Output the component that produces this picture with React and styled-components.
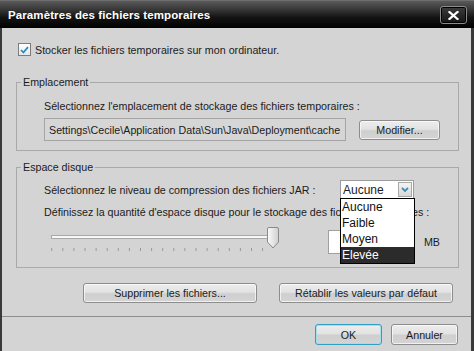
import React from 'react';
import styled, { createGlobalStyle } from 'styled-components';

const GlobalStyle = createGlobalStyle`
  html, body {
    margin: 0;
    padding: 0;
    background: #d4d4d4;
  }
  * {
    box-sizing: border-box;
  }
`;

const Window = styled.div`
  width: 474px;
  height: 351px;
  display: flex;
  flex-direction: column;
  font-family: 'Liberation Sans', Arial, sans-serif;
  font-size: 10.7px;
  color: #1b1b1b;
  overflow: hidden;
`;

const TitleBar = styled.div`
  height: 28px;
  flex: none;
  display: flex;
  align-items: center;
  justify-content: space-between;
  padding: 0 7px 0 8px;
  background: linear-gradient(to bottom, #5a5a5a 0%, #333 35%, #141414 60%, #000 100%);
  border-top: 1px solid #6e6e6e;
`;

const Title = styled.span`
  color: #fff;
  font-weight: bold;
  font-size: 11.5px;
  letter-spacing: 0.1px;
`;

const CloseButton = styled.div`
  width: 27px;
  height: 18px;
  border-radius: 3px;
  border: 1px solid #8c8c8c;
  box-shadow: inset 0 0 0 1px #000;
  background: linear-gradient(to bottom, #3c3c3c, #151515);
  display: flex;
  align-items: center;
  justify-content: center;
  margin-top: 1px;
`;

const Frame = styled.div`
  flex: 1;
  display: flex;
  flex-direction: column;
  border-left: 2px solid #3a3a3a;
  border-right: 3px solid #3a3a3a;
  background: #d4d4d4;
`;

const Body = styled.div`
  padding: 0 12px 0 14px;
  display: flex;
  flex-direction: column;
`;

const CheckRow = styled.label`
  display: flex;
  align-items: center;
  gap: 4px;
  margin-top: 15px;
  margin-left: 2px;
  height: 13px;
`;

const CheckBox = styled.span`
  width: 13px;
  height: 13px;
  border: 1px solid #7c7c7c;
  background: linear-gradient(to bottom, #fff, #e6e6e6);
  display: flex;
  align-items: center;
  justify-content: center;
`;

const GroupBox = styled.fieldset`
  margin: ${({ $top }) => $top}px 0 0 0;
  padding: 0;
  border: 1px solid #a9a9a9;
  min-width: 0;
`;

const Legend = styled.legend`
  margin-left: 4px;
  padding: 0 2px;
  line-height: 13px;
`;

const GroupContent = styled.div`
  padding: ${({ $pad }) => $pad};
  display: flex;
  flex-direction: column;
`;

const Line = styled.div`
  line-height: 14px;
  margin-top: ${({ $top }) => $top || 0}px;
  white-space: nowrap;
`;

const Row = styled.div`
  display: flex;
  align-items: ${({ $align }) => $align || 'center'};
  margin-top: ${({ $top }) => $top || 0}px;
`;

const PathField = styled.div`
  width: 304px;
  height: 23px;
  border: 1px solid #a4a4a4;
  background: #d6d6d6;
  display: flex;
  align-items: center;
  padding-left: 4px;
  white-space: nowrap;
  overflow: hidden;
  margin-right: 13px;
`;

const Button = styled.div`
  width: ${({ $w }) => $w}px;
  height: ${({ $h }) => $h || 20}px;
  border-radius: 3px;
  border: 1px solid ${({ $focus }) => ($focus ? '#2f9fc4' : '#8d8d8d')};
  box-shadow: inset 0 0 0 1px ${({ $focus }) => ($focus ? '#a6dcec' : 'rgba(255,255,255,0.65)')};
  background: linear-gradient(to bottom, #ededed 0%, #e2e2e2 45%, #cfcfcf 55%, #d4d4d4 100%);
  display: flex;
  align-items: center;
  justify-content: center;
  white-space: nowrap;
  flex: none;
`;

const Label = styled.span`
  width: ${({ $w }) => $w}px;
  flex: none;
  white-space: nowrap;
  line-height: 14px;
`;

const Select = styled.div`
  position: relative;
  width: 74px;
  height: 19px;
  border: 1px solid #9c9c9c;
  background: #fff;
  display: flex;
  align-items: center;
  justify-content: space-between;
  padding: 0 1px 0 2px;
  font-size: 12px;
`;

const SelectArrow = styled.span`
  width: 14px;
  height: 15px;
  border: 1px solid #a8a8a8;
  background: linear-gradient(to bottom, #f4f4f4, #d8d8d8);
  display: flex;
  align-items: center;
  justify-content: center;
`;

const OptionList = styled.div`
  position: absolute;
  top: 100%;
  left: -1px;
  width: 75px;
  border: 1px solid #000;
  background: #fff;
  z-index: 2;
`;

const Option = styled.div`
  height: 16px;
  line-height: 16px;
  padding-left: 1px;
  font-size: 12px;
  background: ${({ $active }) => ($active ? '#2b2b2b' : 'transparent')};
  color: ${({ $active }) => ($active ? '#fff' : '#111')};
`;

const Slider = styled.svg`
  margin-left: 7px;
  flex: none;
  display: block;
`;

const NumberField = styled.div`
  width: 80px;
  height: 24px;
  margin: 5px 0 0 47px;
  border: 1px solid #a0a0a0;
  background: #fff;
`;

const Unit = styled.span`
  margin: 10px 0 0 20px;
  line-height: 14px;
`;

const ActionRow = styled.div`
  display: flex;
  justify-content: flex-end;
  gap: 22px;
  margin-top: 15px;
  padding-right: 6px;
`;

const Separator = styled.div`
  height: 1px;
  background: #8e8e8e;
  margin-top: 13px;
`;

const Footer = styled.div`
  display: flex;
  justify-content: flex-end;
  gap: 9px;
  margin-top: 7px;
  padding-right: 13px;
`;

const options = ['Aucune', 'Faible', 'Moyen', 'Elevée'];

function SliderDrawing() {
  const ticks = [];
  for (let k = 0; k < 20; k++) {
    const x = 0.7 + k * 11.1;
    ticks.push(<line key={k} x1={x} x2={x} y1={23} y2={26} stroke="#9a9a90" strokeWidth="1" />);
  }
  return (
    <Slider width="230" height="28" viewBox="0 0 230 28">
      <defs>
        <linearGradient id="thumb" x1="0" x2="1" y1="0" y2="0">
          <stop offset="0" stopColor="#fbfbfb" />
          <stop offset="1" stopColor="#cfcfcf" />
        </linearGradient>
      </defs>
      <rect x="0.5" y="10.5" width="222" height="3" fill="#f7f7f7" stroke="#a9a9a9" />
      {ticks}
      <path
        d="M216.5 4 Q216.5 2.5 218 2.5 H226 Q227.5 2.5 227.5 4 V17 L222 23 L216.5 17 Z"
        fill="url(#thumb)"
        stroke="#8a8a8a"
      />
    </Slider>
  );
}

export default function App() {
  return (
    <>
      <GlobalStyle />
      <Window>
        <TitleBar>
          <Title>Paramètres des fichiers temporaires</Title>
          <CloseButton>
            <svg width="11" height="9" viewBox="0 0 11 9">
              <path d="M1.5 1 L9.5 8 M9.5 1 L1.5 8" stroke="#fff" strokeWidth="2.2" strokeLinecap="square" />
            </svg>
          </CloseButton>
        </TitleBar>
        <Frame>
          <Body>
            <CheckRow>
              <CheckBox>
                <svg width="9" height="8" viewBox="0 0 9 8">
                  <path d="M1 4 L3.4 6.5 L8 1.2" fill="none" stroke="#2a8bc6" strokeWidth="1.8" />
                </svg>
              </CheckBox>
              <span>Stocker les fichiers temporaires sur mon ordinateur.</span>
            </CheckRow>

            <GroupBox $top={20}>
              <Legend>Emplacement</Legend>
              <GroupContent $pad="10px 18px 9px 27px">
                <Line>Sélectionnez l'emplacement de stockage des fichiers temporaires :</Line>
                <Row $top={5}>
                  <PathField>Settings\Cecile\Application Data\Sun\Java\Deployment\cache</PathField>
                  <Button $w={81}>Modifier...</Button>
                </Row>
              </GroupContent>
            </GroupBox>

            <GroupBox $top={10}>
              <Legend>Espace disque</Legend>
              <GroupContent $pad="6px 18px 13px 27px">
                <Row>
                  <Label $w={296}>Sélectionnez le niveau de compression des fichiers JAR :</Label>
                  <Select>
                    <span>Aucune</span>
                    <SelectArrow>
                      <svg width="8" height="6" viewBox="0 0 8 6">
                        <path d="M1 1 L4 4 L7 1" fill="none" stroke="#3f8fb0" strokeWidth="1.8" />
                      </svg>
                    </SelectArrow>
                    <OptionList>
                      {options.map((o, i) => (
                        <Option key={o} $active={i === options.length - 1}>
                          {o}
                        </Option>
                      ))}
                    </OptionList>
                  </Select>
                </Row>
                <Line $top={6}>Définissez la quantité d'espace disque pour le stockage des fichiers temporaires :</Line>
                <Row $top={6} $align="flex-start">
                  <SliderDrawing />
                  <NumberField />
                  <Unit>MB</Unit>
                </Row>
              </GroupContent>
            </GroupBox>

            <ActionRow>
              <Button $w={174}>Supprimer les fichiers...</Button>
              <Button $w={174}>Rétablir les valeurs par défaut</Button>
            </ActionRow>
          </Body>
          <Separator />
          <Footer>
            <Button $w={67} $h={21} $focus>
              OK
            </Button>
            <Button $w={67} $h={21}>
              Annuler
            </Button>
          </Footer>
        </Frame>
      </Window>
    </>
  );
}
